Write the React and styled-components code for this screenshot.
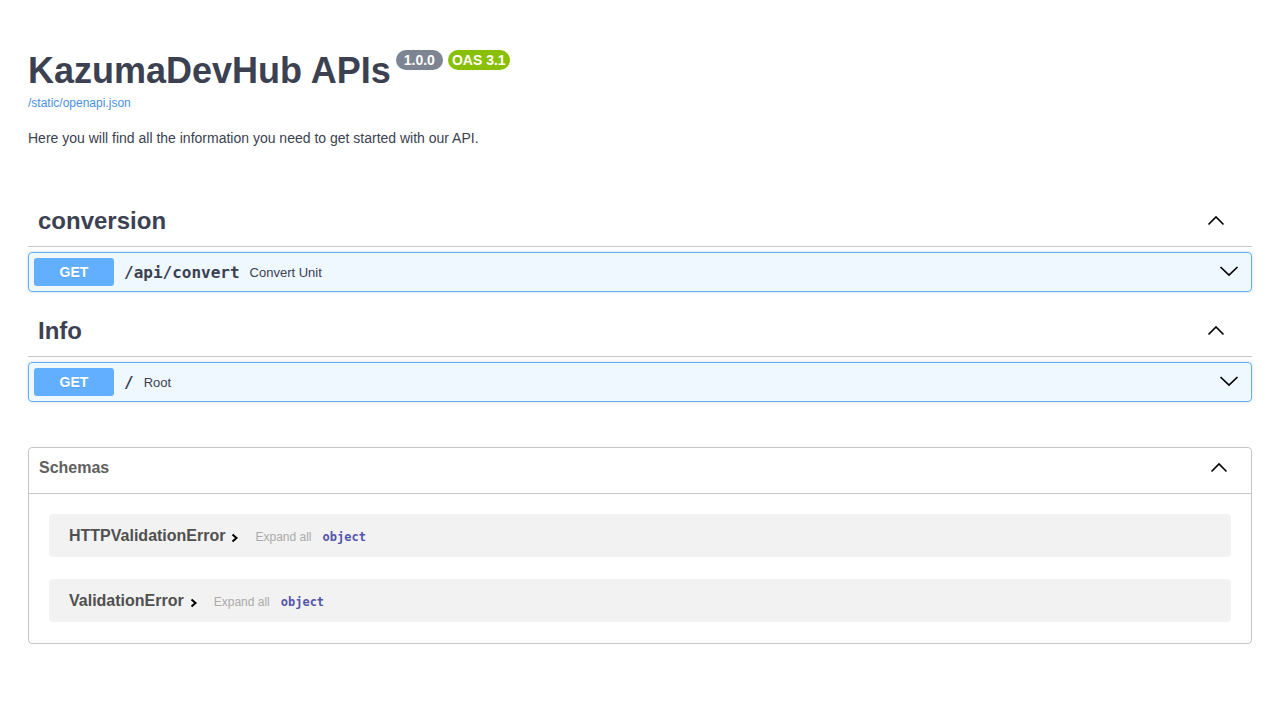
import React from "react";
import styled, { createGlobalStyle } from "styled-components";

const Global = createGlobalStyle`
  body { margin: 8px; background: #fff; font-family: "Liberation Sans", Arial, sans-serif; color: #3b4151; }
`;

const Wrapper = styled.div`
  max-width: 1460px;
  margin: 0 auto;
  padding: 0 20px;
  box-sizing: border-box;
`;

const Info = styled.div`
  margin: 42px 0 51px;
`;

const TitleRow = styled.h2`
  margin: 0;
  font-size: 36px;
  font-weight: 700;
  color: #3b4151;
  font-family: "Liberation Sans", Arial, sans-serif;
  display: flex;
  align-items: flex-start;
`;

const Badge = styled.span`
  display: inline-block;
  background: ${(p) => p.$bg};
  border-radius: 57px;
  color: #fff;
  font-size: 14px;
  font-weight: 700;
  padding: 2px ${(p) => p.$px}px;
  margin: 0 0 0 ${(p) => p.$ml}px;
  line-height: 16px;
`;

const BaseUrl = styled.a`
  display: block;
  margin-top: 4px;
  font-size: 12px;
  color: #4990e2;
  text-decoration: none;
`;

const Desc = styled.p`
  margin: 20px 0 0;
  font-size: 14px;
  color: #3b4151;
`;

const Tag = styled.h3`
  margin: 0 0 5px;
  padding: 9px 20px 11px 10px;
  border-bottom: 1px solid rgba(59, 65, 81, 0.3);
  font-size: 24px;
  font-weight: 700;
  color: #3b4151;
  display: flex;
  align-items: center;
  justify-content: space-between;
  height: 29px;
  line-height: 29px;
`;

const Opblock = styled.div`
  border: 1px solid #61affe;
  background: rgba(97, 175, 254, 0.1);
  border-radius: 4px;
  box-shadow: 0 0 3px rgba(0, 0, 0, 0.19);
  margin: 0 0 15px;
  padding: 5px;
  display: flex;
  align-items: center;
`;

const Method = styled.span`
  background: #61affe;
  border-radius: 3px;
  color: #fff;
  font-size: 14px;
  font-weight: 700;
  min-width: 80px;
  padding: 6px 0;
  text-align: center;
  text-shadow: 0 1px 0 rgba(0, 0, 0, 0.1);
  line-height: 16px;
`;

const Path = styled.span`
  font-family: "DejaVu Sans Mono", monospace;
  font-size: 16px;
  font-weight: 600;
  padding: 0 10px;
  color: #3b4151;
`;

const Summary = styled.span`
  font-size: 13px;
  color: #3b4151;
  flex: 1;
`;

const ArrowBtn = styled.span`
  display: flex;
  align-items: center;
  padding-right: ${(p) => p.$pr || 0}px;
`;

const Section = styled.section`
  margin-bottom: 45px;
`;

const Models = styled.section`
  border: 1px solid rgba(59, 65, 81, 0.3);
  border-radius: 4px;
  margin: 0 0 20px;
`;

const ModelsHead = styled.h4`
  margin: 0;
  padding: 7px 20px 13px 10px;
  border-bottom: 1px solid rgba(59, 65, 81, 0.3);
  font-size: 16px;
  font-weight: 700;
  color: #606060;
  display: flex;
  align-items: center;
  justify-content: space-between;
  height: 25px;
`;

const ModelList = styled.div`
  padding: 20px 0 0;
`;

const ModelRow = styled.div`
  background: rgba(0, 0, 0, 0.05);
  border-radius: 4px;
  margin: 0 20px 22px;
  padding: 0 20px;
  height: 43px;
  display: flex;
  align-items: center;

  &:last-child {
    margin-bottom: 21px;
  }
`;

const ModelTitle = styled.span`
  font-size: 16px;
  font-weight: 700;
  color: #505050;
  display: flex;
  align-items: center;
  padding-top: 1px;
`;

const Expand = styled.span`
  font-size: 12px;
  color: #aaa;
  margin-left: 14px;
  padding-top: 3px;
`;

const PropType = styled.span`
  font-family: "DejaVu Sans Mono", monospace;
  font-size: 12px;
  font-weight: 700;
  color: #55a;
  margin-left: 11px;
  padding-top: 3px;
`;

const Up = ({ size = 20 }) => (
  <svg width={size} height={size} viewBox="0 0 20 20">
    <polyline points="2.5,13.5 10,6 17.5,13.5" fill="none" stroke="#000" strokeWidth="1.6" />
  </svg>
);

const Down = () => (
  <svg width="20" height="20" viewBox="0 0 20 20">
    <polyline points="1.5,5 10,13 18.5,5" fill="none" stroke="#000" strokeWidth="1.7" />
  </svg>
);

const Right = () => (
  <svg width="12" height="12" viewBox="0 0 12 12" style={{ marginLeft: 4, marginTop: 3 }}>
    <polyline points="3.5,2.5 7.5,6 3.5,9.5" fill="none" stroke="#000" strokeWidth="2" />
  </svg>
);

function Op({ path, summary }) {
  return (
    <Opblock>
      <Method>GET</Method>
      <Path>{path}</Path>
      <Summary>{summary}</Summary>
      <ArrowBtn $pr={7}>
        <Down />
      </ArrowBtn>
    </Opblock>
  );
}

function TagSection({ name, path, summary }) {
  return (
    <>
      <Tag>
        <span>{name}</span>
        <ArrowBtn $pr={6}>
          <Up />
        </ArrowBtn>
      </Tag>
      <Op path={path} summary={summary} />
    </>
  );
}

export default function App() {
  return (
    <>
      <Global />
      <Wrapper>
        <Info>
          <TitleRow>
            KazumaDevHub APIs
            <Badge $bg="#7d8492" $ml={5} $px={8}>1.0.0</Badge>
            <Badge $bg="#89bf04" $ml={5} $px={4}>OAS 3.1</Badge>
          </TitleRow>
          <BaseUrl href="#">/static/openapi.json</BaseUrl>
          <Desc>Here you will find all the information you need to get started with our API.</Desc>
        </Info>
        <Section>
          <TagSection name="conversion" path="/api/convert" summary="Convert Unit" />
          <TagSection name="Info" path="/" summary="Root" />
        </Section>
        <Models>
          <ModelsHead>
            <span>Schemas</span>
            <ArrowBtn $pr={2}>
              <Up />
            </ArrowBtn>
          </ModelsHead>
          <ModelList>
            <ModelRow>
              <ModelTitle>HTTPValidationError<Right /></ModelTitle>
              <Expand>Expand all</Expand>
              <PropType>object</PropType>
            </ModelRow>
            <ModelRow>
              <ModelTitle>ValidationError<Right /></ModelTitle>
              <Expand>Expand all</Expand>
              <PropType>object</PropType>
            </ModelRow>
          </ModelList>
        </Models>
      </Wrapper>
    </>
  );
}
